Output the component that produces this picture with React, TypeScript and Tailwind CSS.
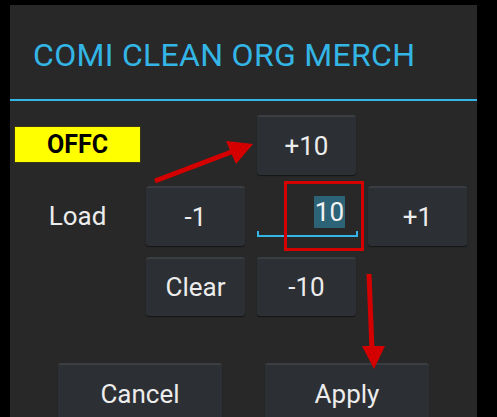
import React from "react";

const font = { fontFamily: "Roboto, 'Noto Sans', sans-serif" };

function Btn({ label, className = "" }: { label: string; className?: string }) {
  return (
    <div
      className={`flex items-center justify-center rounded-[3px] bg-[#2c2f33] border-t-2 border-[#3a3d41] shadow-[0_1px_1px_rgba(0,0,0,0.5)] text-[26px] text-[#ececec] ${className}`}
    >
      {label}
    </div>
  );
}

export default function App() {
  return (
    <div className="relative w-[497px] h-[417px] bg-black overflow-hidden" style={font}>
      <div className="ml-[10px] mt-[5px] w-[467px] h-[440px] bg-[#282828]">
        <div className="h-[94px] pt-[33px] pl-[23px] text-[32px] leading-[34px] tracking-[0.3px] text-[#33b5e5]">
          COMI CLEAN ORG MERCH
        </div>
        <div className="h-[2px] bg-[#33b5e5]" />
        <div className="pt-[14px]">
          {/* Row A */}
          <div className="flex h-[60px]">
            <div className="ml-[4px] mt-[11px] w-[127px] h-[37px] bg-[#ffff00] border border-[#3a3a10] flex items-center justify-center text-black font-bold text-[25px]">
              OFFC
            </div>
            <Btn label="+10" className="ml-[116px] w-[99px] h-[60px]" />
          </div>
          {/* Row B */}
          <div className="flex h-[60px] mt-[11px]">
            <div className="ml-[4px] w-[127px] flex items-center justify-center text-[26px] text-[#ececec]">
              Load
            </div>
            <Btn label="-1" className="ml-[5px] w-[99px] h-[60px]" />
            <div className="relative ml-[12px] w-[101px] h-[60px]">
              <div className="absolute right-[13px] top-[10px] h-[32px] px-[1px] bg-[#2c6377] text-[26px] leading-[32px] text-[#f2f2f2]">
                10
              </div>
              <div className="absolute left-0 right-0 top-[49px] h-[2px] bg-[#33b5e5]" />
              <div className="absolute left-0 top-[45px] w-[2px] h-[6px] bg-[#33b5e5]" />
              <div className="absolute right-0 top-[45px] w-[2px] h-[6px] bg-[#33b5e5]" />
            </div>
            <Btn label="+1" className="ml-[10px] w-[99px] h-[60px]" />
          </div>
          {/* Row C */}
          <div className="flex h-[59px] mt-[11px]">
            <Btn label="Clear" className="ml-[136px] w-[99px] h-[59px]" />
            <Btn label="-10" className="ml-[12px] w-[99px] h-[59px]" />
          </div>
          {/* Row D */}
          <div className="flex h-[60px] mt-[47px]">
            <Btn label="Cancel" className="ml-[48px] w-[164px] h-[60px]" />
            <Btn label="Apply" className="ml-[43px] w-[164px] h-[60px]" />
          </div>
        </div>
      </div>
      {/* red annotations */}
      <svg className="absolute left-0 top-0 pointer-events-none" width="497" height="417">
        <rect x="285.5" y="182.5" width="77" height="67" fill="none" stroke="#d40000" strokeWidth="3" />
        <line x1="155" y1="181" x2="234" y2="151" stroke="#d40000" strokeWidth="5" />
        <polygon points="226,141 253,144 236,164" fill="#d40000" />
        <line x1="369" y1="274" x2="372" y2="350" stroke="#d40000" strokeWidth="5" />
        <polygon points="362,346 385,346 374,369" fill="#d40000" />
      </svg>
    </div>
  );
}
